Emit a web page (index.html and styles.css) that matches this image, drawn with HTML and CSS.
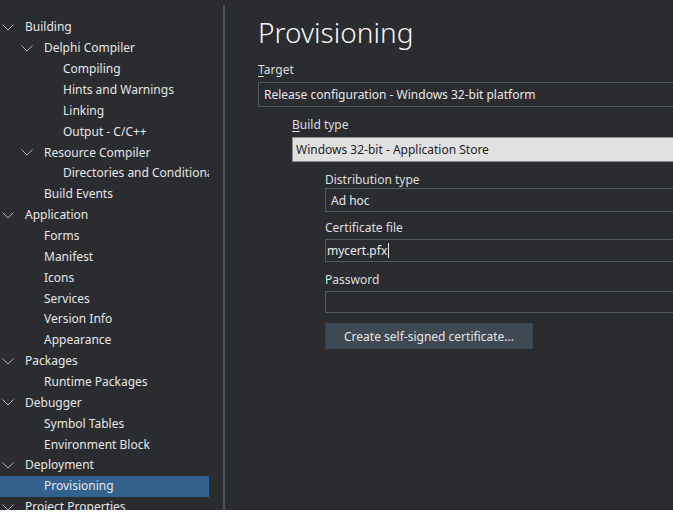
FILE: index.html
```html
<!DOCTYPE html>
<html>
<head>
<meta charset="utf-8">
<link rel="stylesheet" href="styles.css">
</head>
<body>
<div class="app">
  <div class="sidebar">
    <ul class="tree">
      <li class="row l0"><span class="chev"><svg width="12" height="7" viewBox="0 0 12 7"><polyline points="0.5,0.5 6,6 11.5,0.5" fill="none" stroke="#b4b4b4" stroke-width="1"/></svg></span><span class="txt">Building</span></li>
      <li class="row l1"><span class="chev"><svg width="12" height="7" viewBox="0 0 12 7"><polyline points="0.5,0.5 6,6 11.5,0.5" fill="none" stroke="#b4b4b4" stroke-width="1"/></svg></span><span class="txt">Delphi Compiler</span></li>
      <li class="row l2"><span class="chev"></span><span class="txt">Compiling</span></li>
      <li class="row l2"><span class="chev"></span><span class="txt">Hints and Warnings</span></li>
      <li class="row l2"><span class="chev"></span><span class="txt">Linking</span></li>
      <li class="row l2"><span class="chev"></span><span class="txt">Output - C/C++</span></li>
      <li class="row l1"><span class="chev"><svg width="12" height="7" viewBox="0 0 12 7"><polyline points="0.5,0.5 6,6 11.5,0.5" fill="none" stroke="#b4b4b4" stroke-width="1"/></svg></span><span class="txt">Resource Compiler</span></li>
      <li class="row l2"><span class="chev"></span><span class="txt">Directories and Conditionals</span></li>
      <li class="row l1"><span class="chev"></span><span class="txt">Build Events</span></li>
      <li class="row l0"><span class="chev"><svg width="12" height="7" viewBox="0 0 12 7"><polyline points="0.5,0.5 6,6 11.5,0.5" fill="none" stroke="#b4b4b4" stroke-width="1"/></svg></span><span class="txt">Application</span></li>
      <li class="row l1"><span class="chev"></span><span class="txt">Forms</span></li>
      <li class="row l1"><span class="chev"></span><span class="txt">Manifest</span></li>
      <li class="row l1"><span class="chev"></span><span class="txt">Icons</span></li>
      <li class="row l1"><span class="chev"></span><span class="txt">Services</span></li>
      <li class="row l1"><span class="chev"></span><span class="txt">Version Info</span></li>
      <li class="row l1"><span class="chev"></span><span class="txt">Appearance</span></li>
      <li class="row l0"><span class="chev"><svg width="12" height="7" viewBox="0 0 12 7"><polyline points="0.5,0.5 6,6 11.5,0.5" fill="none" stroke="#b4b4b4" stroke-width="1"/></svg></span><span class="txt">Packages</span></li>
      <li class="row l1"><span class="chev"></span><span class="txt">Runtime Packages</span></li>
      <li class="row l0"><span class="chev"><svg width="12" height="7" viewBox="0 0 12 7"><polyline points="0.5,0.5 6,6 11.5,0.5" fill="none" stroke="#b4b4b4" stroke-width="1"/></svg></span><span class="txt">Debugger</span></li>
      <li class="row l1"><span class="chev"></span><span class="txt">Symbol Tables</span></li>
      <li class="row l1"><span class="chev"></span><span class="txt">Environment Block</span></li>
      <li class="row l0"><span class="chev"><svg width="12" height="7" viewBox="0 0 12 7"><polyline points="0.5,0.5 6,6 11.5,0.5" fill="none" stroke="#b4b4b4" stroke-width="1"/></svg></span><span class="txt">Deployment</span></li>
      <li class="row l1 selected"><span class="chev"></span><span class="txt">Provisioning</span></li>
      <li class="row l0"><span class="chev"><svg width="12" height="7" viewBox="0 0 12 7"><polyline points="0.5,0.5 6,6 11.5,0.5" fill="none" stroke="#b4b4b4" stroke-width="1"/></svg></span><span class="txt">Project Properties</span></li>
    </ul>
  </div>
  <div class="divider"></div>
  <div class="content">
    <h1 class="title">Provisioning</h1>
    <div class="label lbl-target"><u>T</u>arget</div>
    <div class="field combo dark f-target">Release configuration - Windows 32-bit platform</div>
    <div class="section s1">
      <div class="label lbl-build"><u>B</u>uild type</div>
      <div class="field combo light f-build">Windows 32-bit - Application Store</div>
      <div class="section s2">
        <div class="label lbl-dist">Distribution type</div>
        <div class="field combo dark f-dist">Ad hoc</div>
        <div class="label lbl-cert">Certificate file</div>
        <div class="field edit f-cert">mycert.pfx<span class="caret"></span></div>
        <div class="label lbl-pass">Password</div>
        <div class="field edit f-pass"></div>
        <button class="btn">Create self-signed certificate...</button>
      </div>
    </div>
  </div>
</div>
</body>
</html>
```
FILE: styles.css
```css
html, body {
  margin: 0;
  padding: 0;
  background: #ffffff;
  overflow: hidden;
}
body {
  width: 673px;
  height: 519px;
  font-family: "Noto Sans", "Open Sans", sans-serif;
  font-size: 12px;
  color: #e4e4e4;
}
.app {
  display: flex;
  height: 510px;
  background: #2b2c30;
  overflow: hidden;
}
.sidebar {
  width: 209px;
  flex: none;
  margin-right: 14px;
  overflow: hidden;
}
.tree {
  list-style: none;
  margin: 0;
  padding: 17px 0 0 0;
}
.row {
  display: flex;
  align-items: center;
  height: 20.86px;
  white-space: nowrap;
  overflow: hidden;
}
.row.l0 { padding-left: 2px; }
.row.l1 { padding-left: 21px; }
.row.l2 { padding-left: 40px; }
.chev {
  width: 12px;
  height: 7px;
  flex: none;
  margin-right: 11px;
  display: flex;
}
.chev svg { display: block; }
.txt {
  line-height: 16px;
  color: #e6e6e6;
}
.row.selected {
  background: #33628f;
}
.divider {
  width: 2px;
  flex: none;
  margin-top: 5px;
  background: #4a515b;
}
.content {
  flex: 1;
  padding-left: 33px;
  min-width: 0;
}
.title {
  margin: 15px 0 0 0;
  font-size: 28px;
  font-weight: 300;
  line-height: 34px;
  height: 34px;
  color: #f4f4f4;
}
.label {
  height: 16px;
  line-height: 16px;
  color: #dedede;
  white-space: nowrap;
}
.label u {
  text-decoration: underline;
  text-underline-offset: 2px;
}
.lbl-target { margin-top: 13px; }
.field {
  box-sizing: border-box;
  width: 600px;
  display: flex;
  align-items: center;
  white-space: nowrap;
}
.combo.dark {
  border: 1px solid #525a64;
  background: #2b2c30;
  color: #e8e8e8;
}
.f-target {
  height: 25px;
  margin-top: 4px;
  padding-left: 5px;
}
.section.s1 { padding-left: 34px; }
.lbl-build { margin-top: 10px; }
.combo.light {
  background: #e1e1e1;
  border: 1px solid #8d8d8d;
  color: #1e1e1e;
}
.f-build {
  height: 25px;
  margin-top: 4px;
  padding-left: 3px;
}
.section.s2 { padding-left: 33px; }
.lbl-dist { margin-top: 10px; }
.f-dist {
  height: 24px;
  margin-top: 0;
  padding-left: 5px;
}
.lbl-cert { margin-top: 8px; }
.edit {
  border: 1px solid #525a64;
  background: #2b2c30;
  color: #ececec;
}
.f-cert {
  height: 23px;
  margin-top: 3px;
  padding-left: 1px;
}
.caret {
  display: inline-block;
  width: 1px;
  height: 15px;
  background: #f0f0f0;
  margin-left: 1px;
}
.lbl-pass { margin-top: 10px; }
.f-pass {
  height: 22px;
  margin-top: 3px;
}
.btn {
  display: block;
  margin-top: 10px;
  width: 208px;
  height: 26px;
  border: 1px solid #3a444e;
  background: #3e4953;
  color: #e6e6e6;
  font-family: inherit;
  font-size: 12px;
  padding: 0;
  cursor: default;
}
```
